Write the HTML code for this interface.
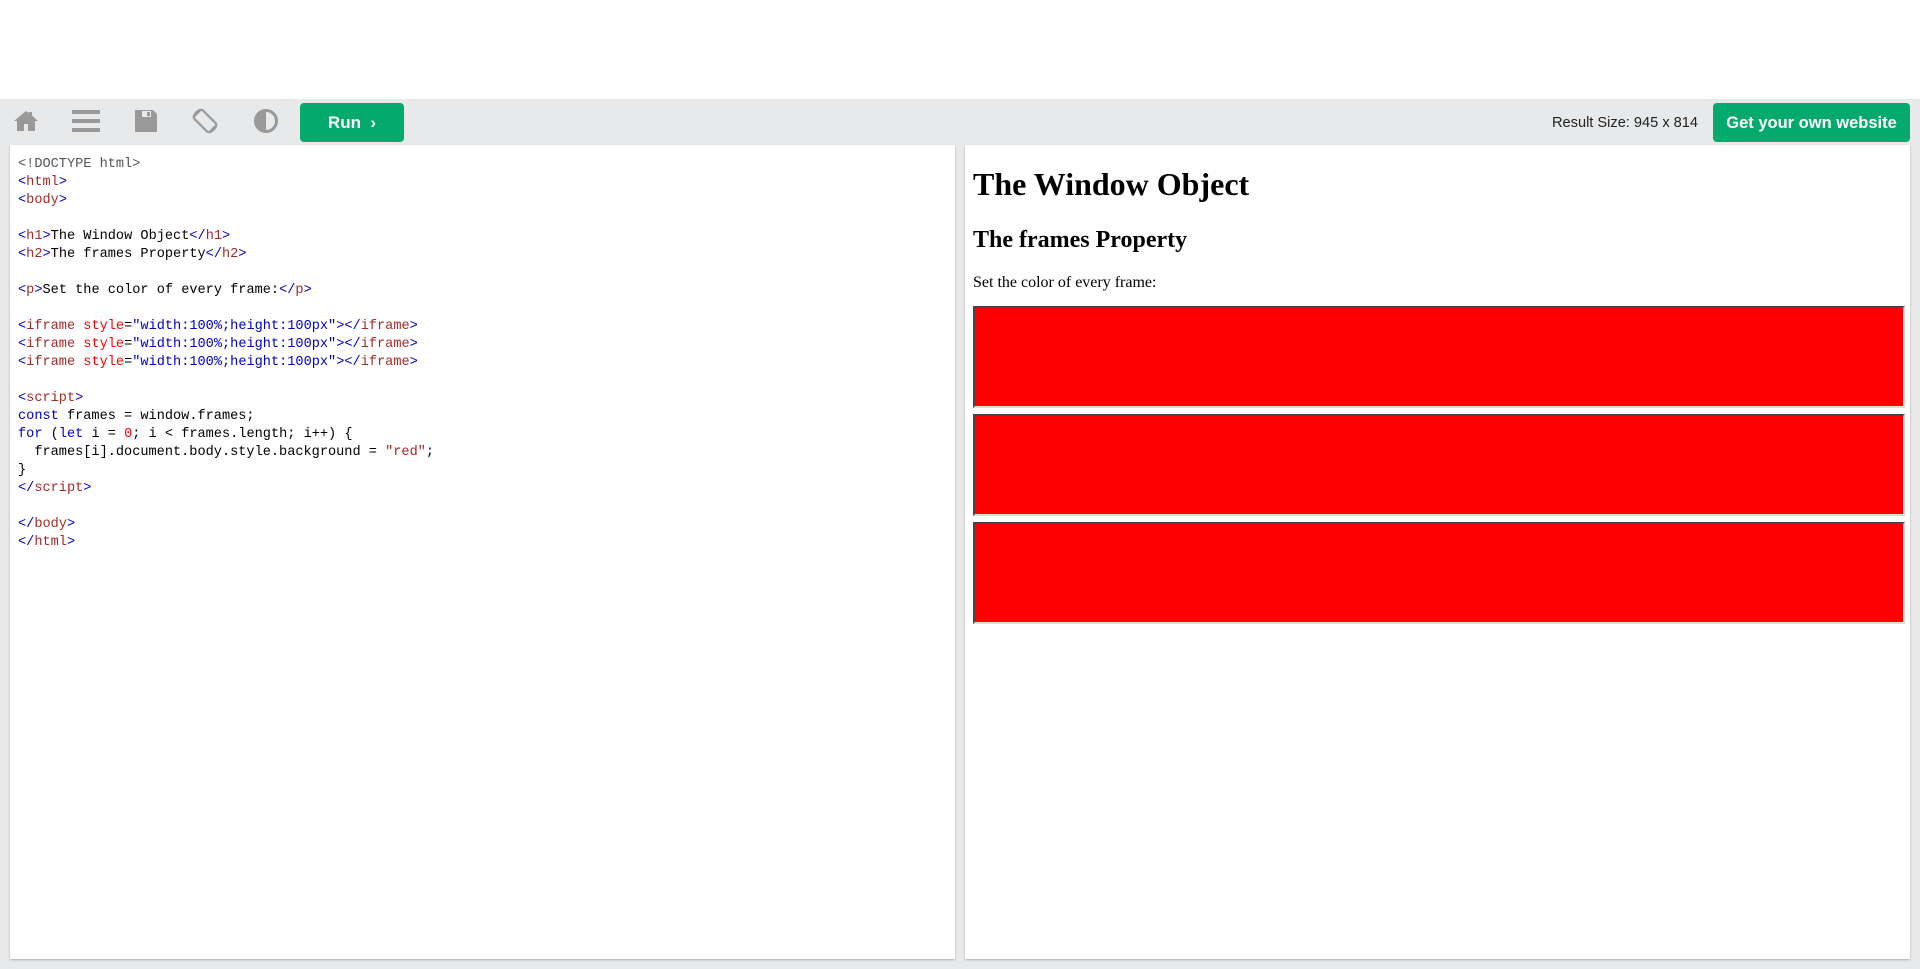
<!DOCTYPE html>
<html><head><style>
body{margin:0;width:1920px;height:969px;background:#fff;position:relative;overflow:hidden;font-family:"Liberation Sans",sans-serif}
#bar{position:absolute;left:0;top:99px;width:1920px;height:870px;background:#e7e9eb}
.ic{position:absolute;top:108px}
#run{position:absolute;left:300px;top:103px;width:104px;height:39px;background:#04aa6d;border-radius:4px;color:#fff;font-weight:bold;font-size:17px;line-height:40px;text-align:center}
#get{position:absolute;left:1713px;top:103px;width:197px;height:39px;background:#04aa6d;border-radius:4px;color:#fff;font-weight:bold;font-size:16.5px;line-height:40px;text-align:center}
#rs{position:absolute;left:1552px;top:115px;font-size:14.6px;color:#222}
.panel{position:absolute;top:145px;height:814px;background:#fff;box-shadow:0 1px 2px rgba(0,0,0,.25)}
#code{left:10px;width:945px}
#res{left:965px;width:945px}
pre{margin:0;position:absolute;left:8px;top:11px;font-family:"Liberation Mono",monospace;font-size:13.6px;line-height:18px;color:#000}
.t{color:#a52a2a}.b{color:#0000cd}.a{color:#f00}.s{color:#0000cd}.k{color:#0000cd}.n{color:#f00}.r{color:#a52a2a}.d{color:#555}
#res h1{position:absolute;left:8px;top:21px;margin:0;font:bold 32px "Liberation Serif",serif}
#res h2{position:absolute;left:8px;top:82px;margin:0;font:bold 24px "Liberation Serif",serif}
#res p{position:absolute;left:8px;top:129px;margin:0;font:16px "Liberation Serif",serif}
.fr{position:absolute;left:8px;width:928px;height:98px;background:#f00;border:2px inset #999;border-color:#999 #ddd #ddd #999}
</style></head><body>
<div id="bar"></div>
<svg class="ic" style="left:13px" width="26" height="26" viewBox="0 0 26 26"><path d="M13 3L1 13h3v10h7v-7h4v7h7V13h3L19 7.5V4h-3v1z" fill="#999"/></svg>
<svg class="ic" style="left:72px" width="28" height="26" viewBox="0 0 28 26"><rect x="0" y="2" width="28" height="4" fill="#999"/><rect x="0" y="11" width="28" height="4" fill="#999"/><rect x="0" y="20" width="28" height="4" fill="#999"/></svg>
<svg class="ic" style="left:134px" width="24" height="26" viewBox="0 0 24 26"><path d="M2 2h17l4 4v17a1 1 0 0 1-1 1H2a1 1 0 0 1-1-1V3a1 1 0 0 1 1-1z" fill="#999"/><rect x="8" y="3" width="9" height="6" fill="#e7e9eb"/><rect x="13" y="4" width="3" height="4" fill="#999"/></svg>
<svg style="position:absolute;left:190px;top:106px" width="30" height="30" viewBox="0 0 30 30"><g fill="none" stroke="#999" stroke-width="2.2"><rect x="9" y="4" width="12" height="22" rx="2" transform="rotate(-45 15 15)"/><path d="M3.5 11A12 12 0 0 1 11 3.5M26.5 19A12 12 0 0 1 19 26.5"/></g></svg>
<svg class="ic" style="left:253px" width="26" height="26" viewBox="0 0 26 26"><circle cx="13" cy="13" r="10.5" fill="none" stroke="#999" stroke-width="3"/><path d="M13 3a10 10 0 0 0 0 20z" fill="#999"/></svg>
<div id="run">Run &nbsp;›</div>
<div id="rs">Result Size: 945 x 814</div>
<div id="get">Get your own website</div>
<div class="panel" id="code"><pre><span class="d">&lt;!DOCTYPE html&gt;</span>
<span class="b">&lt;</span><span class="t">html</span><span class="b">&gt;</span>
<span class="b">&lt;</span><span class="t">body</span><span class="b">&gt;</span>

<span class="b">&lt;</span><span class="t">h1</span><span class="b">&gt;</span>The Window Object<span class="b">&lt;/</span><span class="t">h1</span><span class="b">&gt;</span>
<span class="b">&lt;</span><span class="t">h2</span><span class="b">&gt;</span>The frames Property<span class="b">&lt;/</span><span class="t">h2</span><span class="b">&gt;</span>

<span class="b">&lt;</span><span class="t">p</span><span class="b">&gt;</span>Set the color of every frame:<span class="b">&lt;/</span><span class="t">p</span><span class="b">&gt;</span>

<span class="b">&lt;</span><span class="t">iframe</span> <span class="a">style</span>=<span class="s">"width:100%;height:100px"</span><span class="b">&gt;&lt;/</span><span class="t">iframe</span><span class="b">&gt;</span>
<span class="b">&lt;</span><span class="t">iframe</span> <span class="a">style</span>=<span class="s">"width:100%;height:100px"</span><span class="b">&gt;&lt;/</span><span class="t">iframe</span><span class="b">&gt;</span>
<span class="b">&lt;</span><span class="t">iframe</span> <span class="a">style</span>=<span class="s">"width:100%;height:100px"</span><span class="b">&gt;&lt;/</span><span class="t">iframe</span><span class="b">&gt;</span>

<span class="b">&lt;</span><span class="t">script</span><span class="b">&gt;</span>
<span class="k">const</span> frames = window.frames;
<span class="k">for</span> (<span class="k">let</span> i = <span class="n">0</span>; i &lt; frames.length; i++) {
  frames[i].document.body.style.background = <span class="r">"red"</span>;
}
<span class="b">&lt;/</span><span class="t">script</span><span class="b">&gt;</span>

<span class="b">&lt;/</span><span class="t">body</span><span class="b">&gt;</span>
<span class="b">&lt;/</span><span class="t">html</span><span class="b">&gt;</span></pre></div>
<div class="panel" id="res">
<h1>The Window Object</h1>
<h2>The frames Property</h2>
<p>Set the color of every frame:</p>
<div class="fr" style="top:161px"></div>
<div class="fr" style="top:269px"></div>
<div class="fr" style="top:377px"></div>
</div>
</body></html>
